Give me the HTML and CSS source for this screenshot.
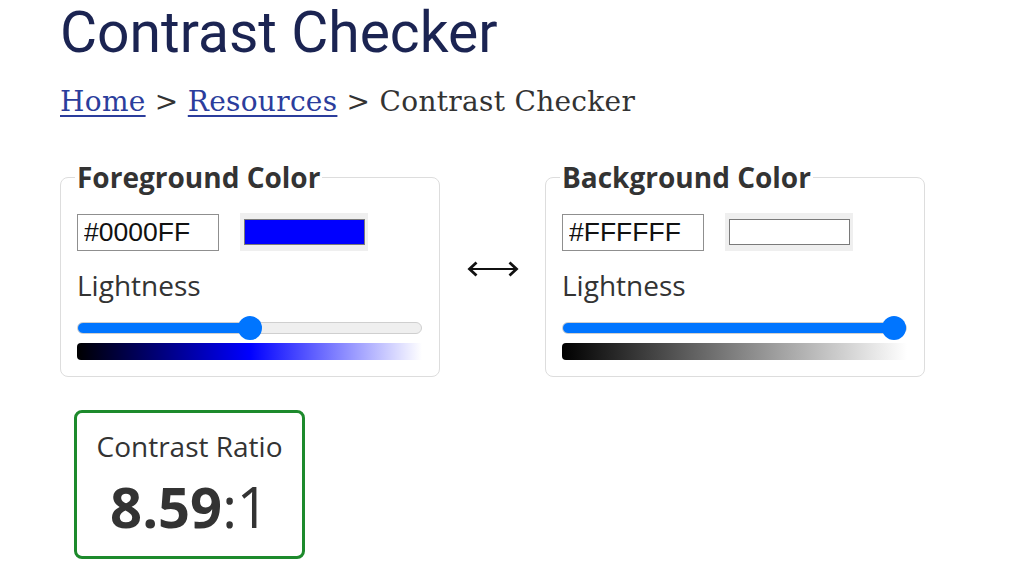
FILE: index.html
```html
<!DOCTYPE html>
<html lang="en">
<head>
<meta charset="utf-8">
<title>Contrast Checker</title>
<link rel="stylesheet" href="styles.css">
</head>
<body>
<main class="page">
  <h1 class="title">Contrast Checker</h1>
  <nav class="crumbs"><a href="#">Home</a> &gt; <a href="#">Resources</a> &gt; Contrast Checker</nav>

  <div class="pickers">
    <fieldset class="picker">
      <legend>Foreground Color</legend>
      <div class="hex-row">
        <input class="hex" type="text" value="#0000FF">
        <div class="swatch"><div class="swatch-fill" style="background:#0000ff"></div></div>
      </div>
      <div class="label">Lightness</div>
      <input class="slider" type="range" min="0" max="100" value="50" style="--fill:172px">
      <div class="bar bar-blue"></div>
    </fieldset>

    <div class="swap">
      <svg width="52" height="16" viewBox="0 0 52 16" aria-hidden="true">
        <path d="M2 8 H50" stroke="#111" stroke-width="2.2" fill="none"/>
        <path d="M9.5 1.5 L2.5 8 L9.5 14.5" stroke="#111" stroke-width="2.8" fill="none" stroke-linejoin="miter"/>
        <path d="M42.5 1.5 L49.5 8 L42.5 14.5" stroke="#111" stroke-width="2.8" fill="none" stroke-linejoin="miter"/>
      </svg>
    </div>

    <fieldset class="picker">
      <legend>Background Color</legend>
      <div class="hex-row">
        <input class="hex" type="text" value="#FFFFFF">
        <div class="swatch"><div class="swatch-fill" style="background:#ffffff"></div></div>
      </div>
      <div class="label">Lightness</div>
      <input class="slider" type="range" min="0" max="100" value="100" style="--fill:345px">
      <div class="bar bar-gray"></div>
    </fieldset>
  </div>

  <section class="ratio">
    <div class="ratio-label">Contrast Ratio</div>
    <div class="ratio-value"><b>8.59</b>:1</div>
  </section>
</main>
</body>
</html>
```

FILE: styles.css
```css
* { box-sizing: border-box; }

html, body {
  margin: 0;
  padding: 0;
  background: #ffffff;
}

body {
  font-family: "Open Sans", "Liberation Sans", sans-serif;
  color: #333333;
}

.page {
  padding: 0 0 0 60px;
}

.title {
  margin: 0;
  font-family: Roboto, "Liberation Sans", sans-serif;
  font-weight: 400;
  font-size: 57px;
  line-height: 66px;
  color: #1b2452;
}

.crumbs {
  margin-top: 19px;
  font-family: "DejaVu Serif", "Liberation Serif", serif;
  font-size: 28px;
  line-height: 34px;
  letter-spacing: 0.3px;
  color: #333333;
}

.crumbs a {
  color: #2b3d9c;
  text-decoration: underline;
  text-underline-offset: 4px;
  text-decoration-thickness: 2px;
}

.pickers {
  display: flex;
  align-items: flex-start;
  margin-top: 40px;
}

.picker {
  margin: 0;
  width: 380px;
  border: 1px solid #dddddd;
  border-radius: 8px;
  padding: 0 17px 16px 16px;
  min-width: 0;
}

.picker legend {
  padding: 0 2px;
  margin-left: -2px;
  font-weight: 700;
  font-size: 28px;
  line-height: 36px;
  color: #333333;
}

.hex-row {
  display: flex;
  align-items: center;
  gap: 21px;
  margin-top: 18px;
}

.hex {
  width: 142px;
  height: 37px;
  margin: 0;
  padding: 0 6px;
  border: 1px solid #8f8f8f;
  border-radius: 0;
  font-family: "Liberation Sans", Arial, sans-serif;
  font-size: 26.5px;
  color: #111111;
  background: #ffffff;
}

.swatch {
  width: 128px;
  height: 38px;
  padding: 6px 3px 6px 4px;
  background: #efefef;
}

.swatch-fill {
  width: 100%;
  height: 100%;
  border: 1px solid #7a7a7a;
}

.label {
  margin-top: 15px;
  font-size: 28px;
  line-height: 38px;
  color: #333333;
}

.slider {
  -webkit-appearance: none;
  appearance: none;
  display: block;
  width: 345px;
  height: 24px;
  margin: 12px 0 0 0;
  padding: 0;
  background: transparent;
}

.slider::-webkit-slider-runnable-track {
  height: 12px;
  border-radius: 6px;
  border: 1px solid #cfcfcf;
  background: linear-gradient(to right, #0075ff 0, #0075ff var(--fill), #efefef var(--fill), #efefef 100%);
}

.slider::-webkit-slider-thumb {
  -webkit-appearance: none;
  appearance: none;
  width: 24px;
  height: 24px;
  border-radius: 50%;
  background: #0075ff;
  border: none;
  margin-top: -7px;
}

.bar {
  width: 345px;
  height: 17px;
  margin-top: 3px;
  border-radius: 4px 0 0 4px;
}

.bar-blue {
  background: linear-gradient(to right, hsl(240, 100%, 0%), hsl(240, 100%, 50%), hsl(240, 100%, 100%));
}

.bar-gray {
  background: linear-gradient(to right, #000000, #ffffff);
}

.swap {
  width: 105px;
  display: flex;
  justify-content: center;
  padding-top: 102px;
}

.swap svg {
  display: block;
}

.ratio {
  width: 231px;
  margin: 33px 0 0 14px;
  border: 3px solid #1d8a2c;
  border-radius: 8px;
  padding: 14px 0 18px 0;
  text-align: center;
}

.ratio-label {
  font-size: 28px;
  line-height: 38px;
  color: #333333;
}

.ratio-value {
  margin-top: 9px;
  font-size: 56px;
  line-height: 64px;
  color: #333333;
}

.ratio-value b {
  font-weight: 700;
}
```
